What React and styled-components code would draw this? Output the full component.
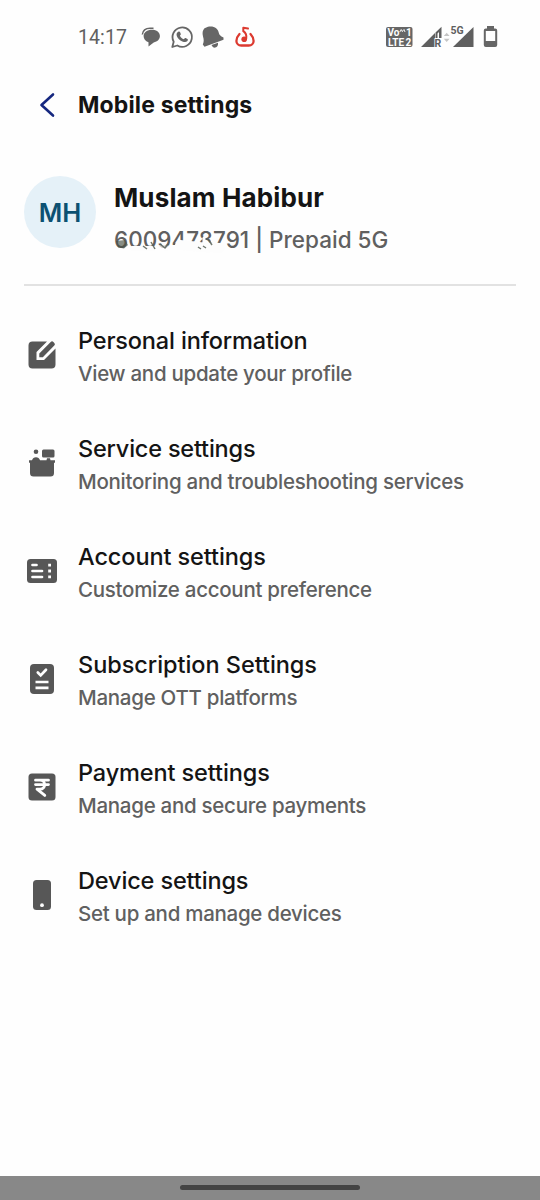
import React from "react";
import styled, { createGlobalStyle } from "styled-components";

const GlobalStyle = createGlobalStyle`
  * { box-sizing: border-box; }
  body { margin: 0; background: #fefefe; }
`;

const Screen = styled.div`
  display: flex;
  flex-direction: column;
  width: 540px;
  height: 1200px;
  overflow: hidden;
  background: #fefefe;
  font-family: Inter, "Liberation Sans", sans-serif;
  color: #141414;
`;

const StatusBar = styled.header`
  display: flex;
  align-items: center;
  justify-content: space-between;
  height: 72px;
  padding: 1px 42px 0 78px;
  flex: none;
`;

const StatusGroup = styled.div`
  display: flex;
  align-items: center;
`;

const Clock = styled.span`
  width: 62px;
  padding-top: 2px;
  font: 400 19.5px/24px Roboto, sans-serif;
  letter-spacing: 0.1px;
  color: #606060;
`;

const Glyph = styled.svg`
  display: block;
  flex: none;
  margin-left: ${(p) => p.$gap || 0}px;
  overflow: visible;
`;

const TitleBar = styled.div`
  display: flex;
  align-items: center;
  height: 66px;
  padding-left: 36px;
  flex: none;
`;

const BackButton = styled.button`
  display: flex;
  width: 42px;
  padding: 0;
  border: 0;
  background: none;
`;

const PageTitle = styled.h1`
  margin: 0;
  font-size: 23px;
  line-height: 30px;
  font-weight: 700;
  letter-spacing: 0.14px;
`;

const Profile = styled.section`
  display: flex;
  height: 148px;
  margin: 0 24px;
  padding-top: 38px;
  gap: 18px;
  border-bottom: 2px solid #e2e2e2;
  flex: none;
`;

const Avatar = styled.div`
  display: flex;
  align-items: center;
  justify-content: center;
  width: 72px;
  height: 72px;
  padding-top: 1px;
  border-radius: 50%;
  background: #e5f1f8;
  color: #0c5172;
  font-size: 25.5px;
  font-weight: 600;
`;

const ProfileText = styled.div`
  padding-top: 4px;
`;

const Name = styled.h2`
  margin: 0;
  font-size: 26px;
  line-height: 36px;
  font-weight: 700;
  letter-spacing: 0.14px;
`;

const Plan = styled.div`
  position: relative;
  margin-top: 9px;
  font-size: 22.5px;
  line-height: 30px;
  font-weight: 500;
  letter-spacing: 0.02px;
  color: #606060;
`;

const Smudge = styled.svg`
  position: absolute;
  left: -6px;
  top: 0;
`;

const Menu = styled.nav`
  display: flex;
  flex-direction: column;
  gap: 42px;
  padding: 36px 24px 0;
  flex: 1;
`;

const MenuRow = styled.div`
  display: flex;
  align-items: center;
  gap: 18px;
  height: 66px;
`;

const RowLabels = styled.div`
  padding-top: 1px;
`;

const RowTitle = styled.div`
  font-size: 23.5px;
  line-height: 36px;
  font-weight: 500;
  letter-spacing: ${(p) => p.$track}px;
  white-space: nowrap;
`;

const RowDetail = styled.div`
  font-size: 20.5px;
  line-height: 30px;
  font-weight: 500;
  letter-spacing: -0.28px;
  color: #606060;
  white-space: nowrap;
`;

const NavigationBar = styled.footer`
  display: flex;
  justify-content: center;
  height: 24px;
  padding-top: 9px;
  background: #888;
  flex: none;
`;

const Handle = styled.div`
  width: 180px;
  height: 5px;
  border-radius: 3px;
  background: #444;
`;

const RowIcon = ({ children }) => (
  <Glyph width="36" height="36" viewBox="0 0 36 36" fill="#575757">
    {children}
  </Glyph>
);

const EditIcon = () => (
  <RowIcon>
    <path d="M8.500 4.500H23L12.500 15v8H20L31.500 11.500V27.500a4 4 0 0 1-4 4h-19a4 4 0 0 1-4-4v-19a4 4 0 0 1 4-4z" />
    <path d="M15.300 20.200v-3.800L26.700 5a1.900 1.900 0 0 1 2.700 0l.9.900a1.900 1.900 0 0 1 0 2.700L18.800 20.200z" />
  </RowIcon>
);

const DeskIcon = () => (
  <RowIcon>
    <circle cx="12" cy="6.800" r="2.300" />
    <rect x="18" y="4.500" width="12.500" height="8" rx="1.500" />
    <path d="M5 15.200h3a4.200 4.200 0 0 1 8 0h6.500l.5-2h3l.500 2h4.500v2.600h-1V28a3.500 3.500 0 0 1-3.500 3.500h-17A3.500 3.500 0 0 1 6 28V17.800H5z" />
  </RowIcon>
);

const AccountIcon = () => (
  <RowIcon>
    <rect x="3" y="6" width="30" height="24" rx="3.500" />
    <path d="M8.500 12h4M8.500 18h9.500M8.500 24h9.500" stroke="#fefefe" strokeWidth="2.700" strokeLinecap="round" />
    <path d="M24.200 10.700h2.800v2.800h-2.800zM24.200 16.600h2.800v2.800h-2.800zM24.200 22.500h2.800v2.800h-2.800z" fill="#fefefe" />
  </RowIcon>
);

const ChecklistIcon = () => (
  <RowIcon>
    <rect x="6" y="3" width="24" height="30" rx="4" />
    <path d="m13.800 11.500 2.900 2.900 5.300-5.600" fill="none" stroke="#fefefe" strokeWidth="2.700" strokeLinecap="round" />
    <path d="M11.500 21h13M11.500 26.800h13" stroke="#fefefe" strokeWidth="2.700" />
  </RowIcon>
);

const RupeeIcon = () => (
  <RowIcon>
    <rect x="4.500" y="4.500" width="27" height="27" rx="3.500" />
    <path d="M11.500 11.200h13M11.500 15.600h13M11.500 11.200h4.500c6.200 0 6.200 9 0 9h-3l7.800 6.200" fill="none" stroke="#fefefe" strokeWidth="2.800" strokeLinecap="round" strokeLinejoin="round" />
  </RowIcon>
);

const PhoneIcon = () => (
  <RowIcon>
    <rect x="9" y="3" width="18" height="30" rx="3.500" />
    <circle cx="18" cy="28.200" r="1.900" fill="#fefefe" />
  </RowIcon>
);

const rows = [
  { title: "Personal information", detail: "View and update your profile", Icon: EditIcon, track: -0.16 },
  { title: "Service settings", detail: "Monitoring and troubleshooting services", Icon: DeskIcon, track: -0.2 },
  { title: "Account settings", detail: "Customize account preference", Icon: AccountIcon, track: -0.1 },
  { title: "Subscription Settings", detail: "Manage OTT platforms", Icon: ChecklistIcon, track: -0.05 },
  { title: "Payment settings", detail: "Manage and secure payments", Icon: RupeeIcon, track: -0.12 },
  { title: "Device settings", detail: "Set up and manage devices", Icon: PhoneIcon, track: -0.14 },
];

const StatusIconsLeft = () => (
  <>
    <Glyph width="20" height="20" viewBox="0 0 20 20" $gap={1}>
      <path d="M1.300 7.500C1.800 3.500 5 1.200 9 1.200h3.500" fill="none" stroke="#666" strokeWidth="1.500" />
      <path d="M11 2.800c4.700 0 7.900 2.700 7.900 6.300 0 3.200-2.500 5.700-6.200 6.500L7.500 19.500v-4.200C4.300 14.300 2.600 12 2.600 9.100c0-3.600 3.700-6.300 8.400-6.300z" fill="#666" />
    </Glyph>
    <Glyph width="22" height="22" viewBox="0 0 22 22" $gap={10}>
      <path d="M1.300 21 2.700 15.800A9.700 9.700 0 1 1 6.300 19.500z" fill="none" stroke="#666" strokeWidth="1.800" strokeLinejoin="round" />
      <path d="M7.300 5.700c.8-.5 1.400-.3 1.700.4l.8 1.900c.2.600-.5 1.100-.9 1.700 1 1.800 2.100 2.800 4 3.600.6-.6 1-1.500 1.700-1.200l1.900 1c.7.300.3 1.700-.3 2.200-1.200 1.100-2.800 1-4.900.1-2.500-1.100-4.600-3.300-5.500-5.500-.6-1.700-.1-3.400 1.500-4.200z" fill="#666" />
    </Glyph>
    <Glyph width="23" height="24" viewBox="0 0 23 24" $gap={9}>
      <path d="M2.500 3.200 6 1.700C12 .5 16 3.500 16.800 7.800c.4 2.100 1.500 3.200 4.700 4.700v2.200L2.500 21.800.8 19.500c1.200-3 1.200-4.500.2-8C.2 8 .5 5.300 2.500 3.200z" fill="#666" />
      <path d="m9.500 20 6.500-2.300c.4 2.700-.8 4.500-2.700 4.900-1.700.3-3-.7-3.800-2.600z" fill="#666" />
    </Glyph>
    <Glyph width="20" height="21" viewBox="0 0 20 21" $gap={10}>
      <path d="M4.500 8C2.800 9.800 1.400 12.800 1.400 15c0 2.700 2.100 4.500 4.800 4.500h7.600c2.700 0 4.800-1.800 4.800-4.500 0-2.200-1.400-5.200-3.100-7" fill="none" stroke="#dc3a30" strokeWidth="2.300" strokeLinecap="round" />
      <path d="M13 2.500 8.300 1.700v3.500c2.800 1.800 3.500 4 2.900 7.500" fill="none" stroke="#dc3a30" strokeWidth="2" strokeLinecap="round" strokeLinejoin="round" />
      <circle cx="9.200" cy="13.200" r="2.800" fill="#dc3a30" />
    </Glyph>
  </>
);

const StatusIconsRight = () => (
  <>
    <Glyph width="27" height="20" viewBox="0 0 27 20">
      <rect x="0" width="26.500" height="20" rx="2" fill="#666" />
      <g fill="#fefefe" fontFamily="Roboto, sans-serif" fontWeight="700">
        <text x="1.500" y="9" fontSize="10">Vo</text>
        <text x="20" y="9" fontSize="10">1</text>
        <text x="2" y="18.500" fontSize="10" textLength="16">LTE</text>
        <text x="19.500" y="18.500" fontSize="10">2</text>
      </g>
      <path d="m13.800 5 1.400-2.500L16.600 5m0-1L18 2.500 19 5" fill="none" stroke="#fefefe" strokeWidth="0.900" />
    </Glyph>
    <Glyph width="54" height="22" viewBox="0 0 54 22" $gap={8}>
      <path d="M0 21 14 7v14zM14.500 6.500 20.500 0.800V12h-2.500V6l-1.500 1.500V12h-2z" fill="#5f5f5f" />
      <text x="13.600" y="21.300" fontFamily="Roboto, sans-serif" fontWeight="700" fontSize="10.500" fill="#5f5f5f" stroke="#fefefe" strokeWidth="1.500" paintOrder="stroke">R</text>
      <path d="m22.800 10 2.900-3.300 2.900 3.300zM22.800 12.700l2.900 3.300 2.900-3.300z" fill="#c5c5c5" />
      <path d="M32 21 52.500 1v20z" fill="#5f5f5f" />
      <text x="29.500" y="8" fontFamily="Roboto, sans-serif" fontWeight="700" fontSize="10.500" fill="#5f5f5f" stroke="#fefefe" strokeWidth="2" paintOrder="stroke">5G</text>
    </Glyph>
    <Glyph width="15" height="22" viewBox="0 0 15 22" $gap={8}>
      <path d="M4 0h7v2.500h1.200a2 2 0 0 1 2 2V19a2 2 0 0 1-2 2H2.800a2 2 0 0 1-2-2V4.500a2 2 0 0 1 2-2H4z" fill="#666" />
      <rect x="2.800" y="5" width="9.400" height="10" fill="#fefefe" />
    </Glyph>
  </>
);

export default function App() {
  return (
    <Screen>
      <GlobalStyle />
      <StatusBar>
        <StatusGroup>
          <Clock>14:17</Clock>
          <StatusIconsLeft />
        </StatusGroup>
        <StatusGroup>
          <StatusIconsRight />
        </StatusGroup>
      </StatusBar>
      <TitleBar>
        <BackButton aria-label="Back">
          <Glyph width="24" height="28" viewBox="0 0 24 28">
            <path d="M17 3.500 5.500 14 17 24.500" fill="none" stroke="#15277f" strokeWidth="2.600" strokeLinecap="round" strokeLinejoin="round" />
          </Glyph>
        </BackButton>
        <PageTitle>Mobile settings</PageTitle>
      </TitleBar>
      <Profile>
        <Avatar>MH</Avatar>
        <ProfileText>
          <Name>Muslam Habibur</Name>
          <Plan>
            6009478791 | Prepaid 5G
            <Smudge width="130" height="48" viewBox="0 0 130 48">
              <g fill="none" stroke="#fdfdfd" strokeLinecap="round">
                <path d="M24 23.500H46" strokeWidth="5" />
                <path d="M50 22.500 60 23" strokeWidth="5" opacity="0.700" />
                <path d="M72 20 92 22 112 23" strokeWidth="10" />
                <path d="M96 13v6M104 16l4-2" strokeWidth="3" />
                <path d="M3 45.500h4" strokeWidth="3" opacity="0.700" />
              </g>
              <path d="m8 16 9-1 3 5-4 3.500-6-1z" fill="#465044" opacity="0.650" />
              <path d="m35 21 4 3M52 19l5 4 3-4M43 17l4 7M95 21l3 2M90 22l3 2M100 14l4 6" fill="none" stroke="#586057" strokeWidth="1.500" opacity="0.850" />
            </Smudge>
          </Plan>
        </ProfileText>
      </Profile>
      <Menu>
        {rows.map(({ title, detail, Icon, track }) => (
          <MenuRow key={title}>
            <Icon />
            <RowLabels>
              <RowTitle $track={track}>{title}</RowTitle>
              <RowDetail>{detail}</RowDetail>
            </RowLabels>
          </MenuRow>
        ))}
      </Menu>
      <NavigationBar>
        <Handle />
      </NavigationBar>
    </Screen>
  );
}
